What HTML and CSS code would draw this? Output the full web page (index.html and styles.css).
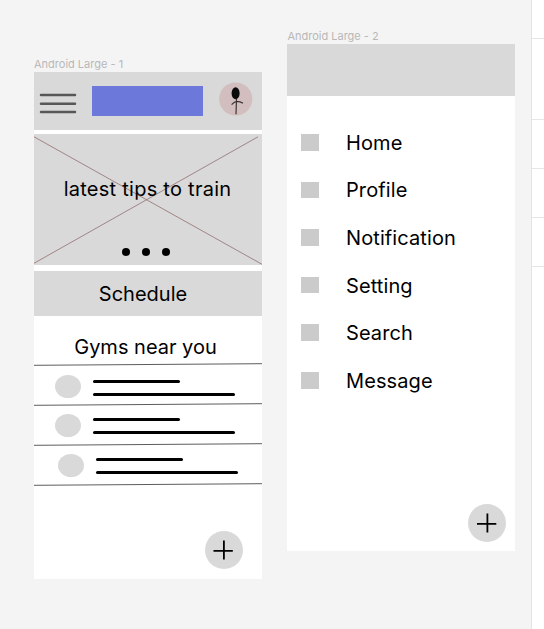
FILE: index.html
```html
<!DOCTYPE html>
<html lang="en">
<head>
<meta charset="utf-8">
<title>Gym app wireframes</title>
<link rel="stylesheet" href="styles.css">
</head>
<body>
<main class="canvas">
  <section class="artboard artboard-home">
    <h2 class="label">Android Large - 1</h2>
    <div class="screen">
      <header class="topbar">
        <svg class="burger" width="38" height="22" viewBox="0 0 38 22"><path d="M2 3H36M2 11.8H36M2 20H36" stroke="#575757" stroke-width="2.5" stroke-linecap="round"/></svg>
        <div class="brand"></div>
        <svg class="avatar" width="34" height="34" viewBox="0 0 34 34" fill="none">
          <circle cx="16.7" cy="17" r="16.6" fill="#d2bebe"/>
          <ellipse cx="16.6" cy="11.3" rx="4" ry="6" fill="#0b0b0b"/>
          <path d="M17.5 17L17 32.2M12.6 22.7Q15 20 17.6 19.4Q21 19.3 24 21.2" stroke="#3c3434" stroke-width="1.2"/>
        </svg>
      </header>
      <div class="hero">
        <svg class="cross" width="228" height="131" viewBox="0 0 228 131"><path d="M0 2.8L228 130.3M0 129.3L224 2.8" stroke="#936f6f" stroke-width=".8"/></svg>
        <p class="hero-title">latest tips to train</p>
        <div class="dots"><i></i><i></i><i></i></div>
      </div>
      <div class="schedule">Schedule</div>
      <h3 class="nearby">Gyms near you</h3>
      <div class="gyms">
        <svg class="rule" viewBox="0 0 228 3"><path d="M0 2.3L228 .7"/></svg>
        <div class="gym"><i class="thumb"></i><div class="lines"><b></b><b></b></div></div>
        <svg class="rule" viewBox="0 0 228 3"><path d="M0 2.3L228 .7"/></svg>
        <div class="gym"><i class="thumb"></i><div class="lines"><b></b><b></b></div></div>
        <svg class="rule" viewBox="0 0 228 3"><path d="M0 2.3L228 .7"/></svg>
        <div class="gym gym-shifted"><i class="thumb"></i><div class="lines"><b></b><b></b></div></div>
        <svg class="rule" viewBox="0 0 228 3"><path d="M0 2.3L228 .7"/></svg>
      </div>
      <svg class="fab" width="38" height="38" viewBox="0 0 38 38"><circle cx="19" cy="19" r="19" fill="#d9d9d9"/><path d="M8.5 19.9H27.8M18.9 9.5V28.5" stroke="#000" stroke-width="1.8"/></svg>
    </div>
  </section>
  <section class="artboard artboard-menu">
    <h2 class="label">Android Large - 2</h2>
    <div class="screen">
      <div class="banner"></div>
      <ul class="menu">
        <li><i></i><span>Home</span></li>
        <li><i></i><span>Profile</span></li>
        <li><i></i><span>Notification</span></li>
        <li><i></i><span>Setting</span></li>
        <li><i></i><span>Search</span></li>
        <li><i></i><span>Message</span></li>
      </ul>
      <svg class="fab" width="38" height="38" viewBox="0 0 38 38"><circle cx="19" cy="19" r="19" fill="#d9d9d9"/><path d="M9 19.9H28.3M19.4 9.5V28.5" stroke="#000" stroke-width="1.8"/></svg>
    </div>
  </section>
</main>
<aside class="panel"><div></div><div></div><div></div><div></div><div></div></aside>
</body>
</html>
```
FILE: styles.css
```css
* { box-sizing: border-box; margin: 0; padding: 0; }
body {
  display: flex;
  width: 544px;
  height: 629px;
  overflow: hidden;
  background: #fff;
  color: #000;
  font-family: Inter, "Liberation Sans", sans-serif;
  font-size: 20px;
}
svg { display: block; flex: none; }
.canvas {
  display: flex;
  align-items: flex-start;
  gap: 25.4px;
  width: 531px;
  height: 629px;
  padding-left: 34px;
  background: #f4f4f4;
}
.panel { flex: 1; border-left: 1px solid #e3e3e3; }
.panel div { height: 49px; border-bottom: 1px solid #e6e6e6; }
.panel div:nth-child(1) { height: 39px; }
.panel div:nth-child(2) { height: 81px; }

.artboard { width: 228px; }
.artboard-home { padding-top: 57px; }
.artboard-menu { padding-top: 29px; }
.label {
  height: 15px;
  color: #b8b8b8;
  font-size: 11px;
  font-weight: 400;
  line-height: 15px;
  white-space: nowrap;
}
.screen {
  display: flex;
  flex-direction: column;
  height: 507px;
  background: #fff;
}
.fab { align-self: flex-end; margin: auto 19.5px 10px 0; }
.artboard-menu .fab { margin: auto 9px 9px 0; }

.topbar {
  display: flex;
  height: 58px;
  padding-left: 5px;
  background: #d9d9d9;
}
.burger { margin-top: 20px; }
.brand {
  width: 111px;
  height: 29.5px;
  margin: 14px 0 0 15px;
  background: #6d79da;
}
.avatar { margin: 10px 0 0 16px; }

.hero {
  position: relative;
  height: 131px;
  margin-top: 4px;
  padding-top: 43px;
  background: #d9d9d9;
  text-align: center;
}
.cross { position: absolute; inset: 0; }
.hero-title {
  position: relative;
  height: 24px;
  margin-right: 1px;
  line-height: 24px;
  letter-spacing: .26px;
}
.dots { display: flex; justify-content: center; gap: 12.4px; margin: 47px 4px 0 0; }
.dots i { width: 8px; height: 8px; border-radius: 50%; background: #000; }

.schedule {
  height: 45px;
  margin-top: 6px;
  padding-right: 10px;
  background: #d9d9d9;
  line-height: 46px;
  text-align: center;
}
.nearby {
  height: 47px;
  padding: 19px 5px 0 0;
  font-size: 20px;
  font-weight: 400;
  line-height: 24px;
  text-align: center;
}
.rule { width: 228px; height: 3px; }
.rule path { stroke: #333; stroke-width: .8; }
.gym { display: flex; height: 37px; padding: 9px 0 0 21px; }
.gym ~ .gym { padding-top: 8px; }
.gym-shifted { padding-left: 23.5px; }
.thumb { width: 26px; height: 23px; border-radius: 50%; background: #d9d9d9; }
.lines { margin: 5px 0 0 12px; }
.gym ~ .gym .lines { margin-top: 4px; }
.lines b { display: block; width: 87px; height: 3px; border-radius: 2px; background: #000; }
.lines b + b { width: 142px; margin-top: 10px; }

.banner { height: 52px; background: #d9d9d9; }
.menu { padding: 22.5px 0 0 14px; list-style: none; }
.menu li { display: flex; align-items: center; gap: 26.6px; height: 47.6px; }
.menu i { width: 18px; height: 16.5px; background: #cbcbcb; }
.menu span { padding-top: 1px; letter-spacing: .1px; }
```
